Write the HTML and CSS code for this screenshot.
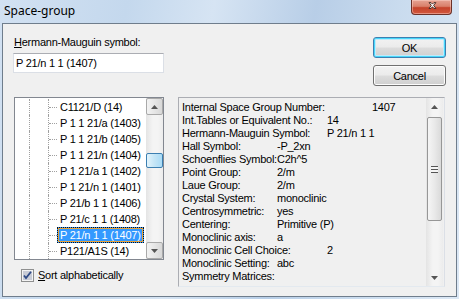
FILE: index.html
```html
<!DOCTYPE html>
<html lang="en">
<head>
    <meta charset="UTF-8">
    <meta name="viewport" content="width=device-width, initial-scale=1.0">
    <title>Space-group</title>
    <link rel="stylesheet" href="styles.css">
</head>
<body>

    <div class="window">
        <div class="titlebar">
            <span class="title">Space-group</span>
            <button class="close-button" aria-label="Close">
                <svg width="41" height="15" viewBox="0 0 41 15">
                    <path d="M18.5 2.5 L20.5 2.5 L22 4 L23.5 2.5 L25.5 2.5 L23.2 5.3 L25.5 8.5 L23.5 8.5 L22 6.7 L20.5 8.5 L18.5 8.5 L20.8 5.3 Z" fill="#fff" stroke="#4a2a22" stroke-width="1"/>
                </svg>
            </button>
        </div>

        <div class="client">
            <div class="top-row">
                <div class="symbol-field">
                    <label for="hm"><u>H</u>ermann-Mauguin symbol:</label>
                    <input id="hm" type="text" value="P 21/n 1 1 (1407)">
                </div>
                <div class="buttons">
                    <button class="btn default">OK</button>
                    <button class="btn">Cancel</button>
                </div>
            </div>

            <div class="bottom-row">
                <div class="left-col">
                    <div class="tree">
                        <ul class="tree-items">
                            <li><span class="g1"></span><span class="g2"><i></i></span><span class="item">C1121/D (14)</span></li>
                            <li><span class="g1"></span><span class="g2"><i></i></span><span class="item">P 1 1 21/a (1403)</span></li>
                            <li><span class="g1"></span><span class="g2"><i></i></span><span class="item">P 1 1 21/b (1405)</span></li>
                            <li><span class="g1"></span><span class="g2"><i></i></span><span class="item">P 1 1 21/n (1404)</span></li>
                            <li><span class="g1"></span><span class="g2"><i></i></span><span class="item">P 1 21/a 1 (1402)</span></li>
                            <li><span class="g1"></span><span class="g2"><i></i></span><span class="item">P 1 21/n 1 (1401)</span></li>
                            <li><span class="g1"></span><span class="g2"><i></i></span><span class="item">P 21/b 1 1 (1406)</span></li>
                            <li><span class="g1"></span><span class="g2"><i></i></span><span class="item">P 21/c 1 1 (1408)</span></li>
                            <li><span class="g1"></span><span class="g2"><i></i></span><span class="item selected">P 21/n 1 1 (1407)</span></li>
                            <li><span class="g1"></span><span class="g2"><i></i></span><span class="item">P121/A1S (14)</span></li>
                        </ul>
                        <div class="scrollbar tree-scroll">
                            <div class="sb-btn boxed">
                                <svg width="7" height="4" viewBox="0 0 7 4"><path d="M0 4 L3.5 0 L7 4 Z" fill="#555"/></svg>
                            </div>
                            <div class="sb-track">
                                <div class="thumb hot"></div>
                            </div>
                            <div class="sb-btn boxed">
                                <svg width="7" height="4" viewBox="0 0 7 4"><path d="M0 0 L3.5 4 L7 0 Z" fill="#555"/></svg>
                            </div>
                        </div>
                    </div>
                    <label class="check">
                        <svg width="13" height="13" viewBox="0 0 13 13">
                            <rect x="0.5" y="0.5" width="12" height="12" fill="#f4f4f4" stroke="#8e8f8f"/>
                            <rect x="2" y="2" width="9" height="9" fill="#c9ccd6"/>
                            <path d="M3 6.5 L5 9 L10 2.8" fill="none" stroke="#2f4a86" stroke-width="1.8"/>
                        </svg>
                        <span><u>S</u>ort alphabetically</span>
                    </label>
                </div>

                <div class="info">
                    <div class="info-text">
                        <div class="line"><span class="k c3">Internal Space Group Number:</span>1407</div>
                        <div class="line"><span class="k c2">Int.Tables or Equivalent No.:</span>14</div>
                        <div class="line"><span class="k c2">Hermann-Mauguin Symbol:</span>P 21/n 1 1</div>
                        <div class="line"><span class="k c1">Hall Symbol:</span>-P_2xn</div>
                        <div class="line"><span class="k c1">Schoenflies Symbol:</span>C2h^5</div>
                        <div class="line"><span class="k c1">Point Group:</span>2/m</div>
                        <div class="line"><span class="k c1">Laue Group:</span>2/m</div>
                        <div class="line"><span class="k c1">Crystal System:</span>monoclinic</div>
                        <div class="line"><span class="k c1">Centrosymmetric:</span>yes</div>
                        <div class="line"><span class="k c1">Centering:</span>Primitive (P)</div>
                        <div class="line"><span class="k c1">Monoclinic axis:</span>a</div>
                        <div class="line"><span class="k c2">Monoclinic Cell Choice:</span>2</div>
                        <div class="line"><span class="k c1">Monoclinic Setting:</span>abc</div>
                        <div class="line"><span class="k">Symmetry Matrices:</span></div>
                    </div>
                    <div class="scrollbar info-scroll">
                        <div class="sb-btn">
                            <svg width="7" height="4" viewBox="0 0 7 4"><path d="M0 4 L3.5 0 L7 4 Z" fill="#555"/></svg>
                        </div>
                        <div class="sb-track">
                            <div class="thumb big"><span class="grip"></span></div>
                        </div>
                        <div class="sb-btn">
                            <svg width="7" height="4" viewBox="0 0 7 4"><path d="M0 0 L3.5 4 L7 0 Z" fill="#555"/></svg>
                        </div>
                    </div>
                </div>
            </div>
        </div>
    </div>

</body>
</html>
```

FILE: styles.css
```css
* {
    box-sizing: border-box;
}

body {
    margin: 0;
    width: 459px;
    height: 299px;
    overflow: hidden;
    font-family: "Liberation Sans", Arial, sans-serif;
    font-size: 11px;
    letter-spacing: -0.25px;
    color: #000;
}

.window {
    width: 459px;
    height: 299px;
    background: linear-gradient(100deg, #d2e1f2 0%, #c4d8ed 25%, #d6e4f3 42%, #b8cee7 62%, #c9dbee 78%, #dce8f5 100%);
}

/* title bar */

.titlebar {
    height: 23px;
    display: flex;
    align-items: flex-start;
}

.title {
    font-family: "Noto Sans", "Open Sans", sans-serif;
    font-size: 12px;
    letter-spacing: 0;
    line-height: 16px;
    margin: 3px 0 0 4px;
}

.close-button {
    margin-left: auto;
    margin-right: 7px;
    width: 41px;
    height: 15px;
    padding: 0;
    border: 1px solid #6b3128;
    border-top: none;
    border-radius: 0 0 4px 4px;
    background: linear-gradient(#e6a394 0%, #d9806b 45%, #c5432b 55%, #d2573d 100%);
    box-shadow: inset 0 0 0 1px rgba(255, 220, 210, 0.45);
    display: flex;
}

.close-button svg {
    margin-left: -1px;
}

/* dialog body */

.client {
    margin-left: 2px;
    width: 455px;
    height: 274px;
    border: 1px solid #6f7d8c;
    background: #f0f0f0;
    padding-top: 12px;
}

.top-row {
    display: flex;
    align-items: flex-start;
}

.symbol-field {
    margin-left: 10px;
    width: 151px;
    display: flex;
    flex-direction: column;
}

.symbol-field label {
    display: block;
    line-height: 13px;
    margin-left: 1px;
}

.symbol-field input {
    margin: 4px 0 0 0;
    width: 151px;
    height: 20px;
    border: 1px solid #dbdfe6;
    border-top-color: #abadb3;
    background: #fff;
    padding: 0 0 0 2px;
    font-family: inherit;
    font-size: 11px;
    letter-spacing: -0.25px;
    outline: none;
}

.buttons {
    margin-left: auto;
    margin-right: 10px;
    margin-top: 1px;
    display: flex;
    flex-direction: column;
    gap: 7px;
}

.btn {
    width: 73px;
    height: 21px;
    padding: 0;
    border: 1px solid #707070;
    border-radius: 3px;
    background: linear-gradient(#f2f2f2 0%, #ebebeb 49%, #dddddd 51%, #cfcfcf 100%);
    box-shadow: inset 0 0 0 1px #fcfcfc;
    font-family: inherit;
    font-size: 11px;
    letter-spacing: -0.25px;
    color: #000;
}

.btn.default {
    border-color: #3c7fb1;
    box-shadow: inset 0 0 0 1px #48d8fb, inset 0 0 0 2px #bfeafb;
}

.bottom-row {
    margin-top: 11px;
    display: flex;
    align-items: flex-start;
}

.left-col {
    margin-left: 11px;
}

/* tree view */

.tree {
    width: 150px;
    height: 163px;
    border: 1px solid #828790;
    background: #fff;
    display: flex;
    overflow: hidden;
}

.tree-items {
    list-style: none;
    margin: 0;
    padding: 1px 0 0 0;
    width: 131px;
    overflow: hidden;
    background: linear-gradient(to right, transparent 14px, transparent 14px);
}

.tree-items li {
    height: 16px;
    display: flex;
    align-items: stretch;
    white-space: nowrap;
}

.g1 {
    margin-left: 14px;
    width: 19px;
    flex-shrink: 0;
    border-left: 1px dotted #a0a0a0;
}

.g2 {
    width: 9px;
    flex-shrink: 0;
    border-left: 1px dotted #a0a0a0;
    display: flex;
    align-items: center;
}

.g2 i {
    width: 8px;
    height: 0;
    border-top: 1px dotted #a0a0a0;
    margin-top: 1px;
}

.item {
    padding: 0 2px;
    border: 1px solid transparent;
    line-height: 14px;
}

.item.selected {
    background: #3399ff;
    color: #fff;
    box-shadow: inset 0 0 0 1px #e8a23a;
    outline: 1px dotted #111;
    outline-offset: -1px;
}

/* scrollbars */

.scrollbar {
    width: 17px;
    flex-shrink: 0;
    display: flex;
    flex-direction: column;
    background: linear-gradient(to right, #e4e4e4, #f4f4f4 40%, #f4f4f4 70%, #ececec);
}

.sb-btn {
    height: 17px;
    display: flex;
    align-items: center;
    justify-content: center;
}

.sb-btn.boxed {
    border: 1px solid #a9a9a9;
    border-radius: 2px;
    background: linear-gradient(to right, #f3f3f3, #e6e6e6 50%, #d8d8d8);
}

.sb-track {
    flex: 1;
}

.thumb.hot {
    margin: 38px 0 0 0;
    height: 15px;
    border: 1px solid #3c7fb1;
    border-radius: 2px;
    background: linear-gradient(to right, #e3f4fc, #c4e5f6 50%, #a9dbf6);
}

.tree-scroll {
    margin-left: auto;
}

.check {
    margin: 9px 0 0 7px;
    display: flex;
    align-items: center;
    gap: 4px;
    line-height: 13px;
}

.check svg {
    flex-shrink: 0;
}

/* info panel */

.info {
    margin-left: 14px;
    width: 267px;
    height: 190px;
    border: 1px solid #abadb3;
    border-right-color: #dbdfe6;
    border-bottom-color: #e3e9ef;
    background: #f0f0f0;
    display: flex;
    overflow: hidden;
}

.info-text {
    flex: 1;
    padding: 3px 0 0 3px;
    overflow: hidden;
    white-space: nowrap;
}

.line {
    line-height: 13px;
    height: 13px;
}

.k {
    display: inline-block;
}

.k.c1 {
    width: 95px;
}

.k.c2 {
    width: 145px;
}

.k.c3 {
    width: 190px;
}

.info-scroll {
    margin-right: 1px;
}

.thumb.big {
    margin: 2px 1px 0 1px;
    height: 104px;
    border: 1px solid #979797;
    border-radius: 2px;
    background: linear-gradient(to right, #f5f5f5, #e9e9e9 50%, #dadada);
    display: flex;
    align-items: center;
    justify-content: center;
}

.grip {
    width: 7px;
    height: 7px;
    border-top: 1px solid #555;
    border-bottom: 1px solid #555;
    background: linear-gradient(#f5f5f5 2px, #555 2px, #555 3px, #f5f5f5 3px);
}
```
